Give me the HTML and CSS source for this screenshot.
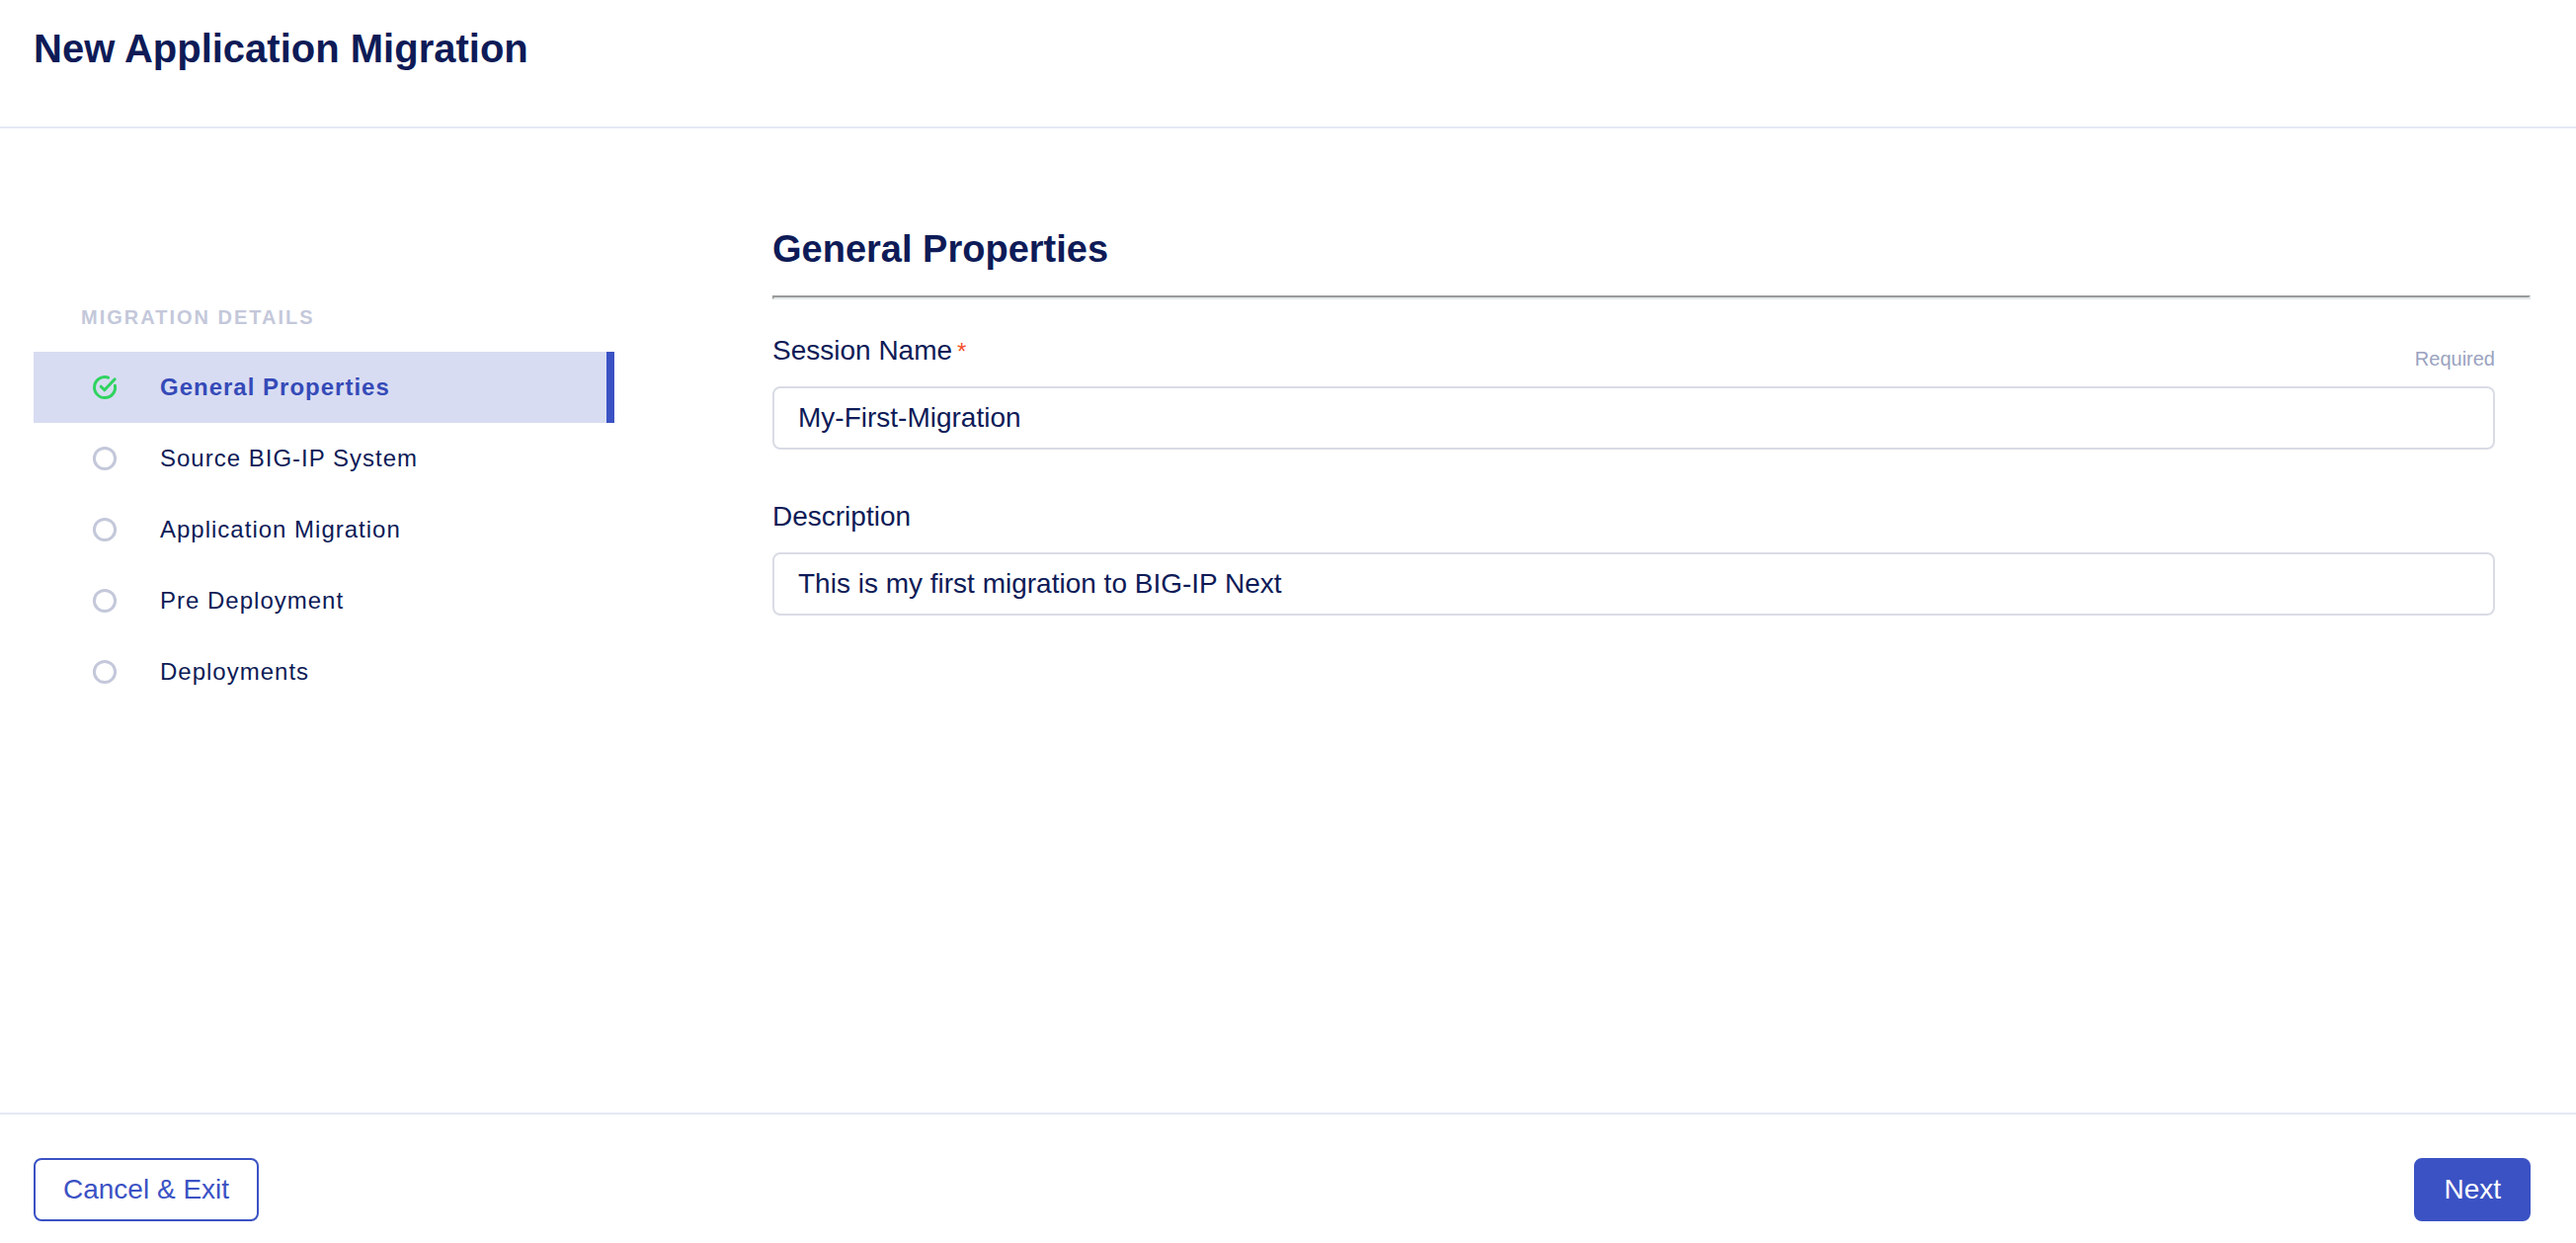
FILE: index.html
```html
<!DOCTYPE html>
<html lang="en">
<head>
  <meta charset="utf-8">
  <meta name="viewport" content="width=device-width, initial-scale=1">
  <title>New Application Migration</title>
  <link rel="stylesheet" href="styles.css">
</head>
<body>
  <header class="page-header">
    <h1 class="page-title">New Application Migration</h1>
  </header>

  <main class="wizard">
    <nav class="steps" aria-labelledby="steps-title">
      <h2 class="steps-title" id="steps-title">MIGRATION DETAILS</h2>
      <ul class="steps-list">
        <li>
          <a class="step step-active" href="#general" aria-current="step">
            <svg class="step-icon icon-done" viewBox="0 0 24 24" aria-hidden="true">
              <path d="M15.6 2.2A10.5 10.5 0 1 0 22.4 10.2"/>
              <path d="M8.2 11.2l3.6 3.6L22.2 3.8"/>
            </svg>
            <span>General Properties</span>
          </a>
        </li>
        <li>
          <a class="step" href="#source">
            <svg class="step-icon" viewBox="0 0 24 24" aria-hidden="true"><circle cx="12" cy="12" r="10.6"/></svg>
            <span>Source BIG-IP System</span>
          </a>
        </li>
        <li>
          <a class="step" href="#application">
            <svg class="step-icon" viewBox="0 0 24 24" aria-hidden="true"><circle cx="12" cy="12" r="10.6"/></svg>
            <span>Application Migration</span>
          </a>
        </li>
        <li>
          <a class="step" href="#pre-deployment">
            <svg class="step-icon" viewBox="0 0 24 24" aria-hidden="true"><circle cx="12" cy="12" r="10.6"/></svg>
            <span>Pre Deployment</span>
          </a>
        </li>
        <li>
          <a class="step" href="#deployments">
            <svg class="step-icon" viewBox="0 0 24 24" aria-hidden="true"><circle cx="12" cy="12" r="10.6"/></svg>
            <span>Deployments</span>
          </a>
        </li>
      </ul>
    </nav>

    <section class="panel" id="general">
      <h2 class="panel-title">General Properties</h2>
      <hr class="divider">
      <form class="fields" id="migration-form">
        <div class="field">
          <div class="field-head">
            <label class="field-label" for="session-name">Session Name<span class="asterisk">*</span></label>
            <span class="field-hint" id="session-hint">Required</span>
          </div>
          <input class="field-input" id="session-name" type="text" value="My-First-Migration" aria-describedby="session-hint" required>
        </div>
        <div class="field">
          <div class="field-head">
            <label class="field-label" for="description">Description</label>
          </div>
          <input class="field-input" id="description" type="text" value="This is my first migration to BIG-IP Next">
        </div>
      </form>
    </section>
  </main>

  <footer class="page-footer">
    <button class="button button-outline" type="button">Cancel &amp; Exit</button>
    <button class="button button-primary" type="submit" form="migration-form">Next</button>
  </footer>
</body>
</html>
```

FILE: styles.css
```css
:root {
  --navy: #0e1b57;
  --blue: #3b52c4;
  --blue-text: #354ab8;
  --line: #e4e9f5;
  --field-line: #d9dce5;
  --muted: #c4c8da;
  --hint: #9aa2bf;
}

* {
  box-sizing: border-box;
}

body {
  display: flex;
  flex-direction: column;
  min-height: 100vh;
  margin: 0;
  background: #fff;
  color: var(--navy);
  font-family: "Liberation Sans", Arial, sans-serif;
}

h1,
h2,
ul {
  margin: 0;
  padding: 0;
}

.page-header {
  padding: 25px 34px 55px;
  border-bottom: 2px solid var(--line);
}

.page-title {
  font-size: 40px;
  line-height: 48px;
}

.wizard {
  display: grid;
  flex: 1;
  grid-template-columns: 588px minmax(0, 1fr);
  gap: 160px;
  padding: 98px 46px 40px 34px;
}

.steps {
  padding-top: 81px;
}

.steps-title {
  padding-left: 48px;
  margin-bottom: 23px;
  color: var(--muted);
  font-size: 20px;
  line-height: 24px;
  letter-spacing: 2px;
}

.steps-list {
  list-style: none;
}

.step {
  display: flex;
  align-items: center;
  gap: 44px;
  height: 72px;
  padding-left: 60px;
  color: var(--navy);
  font-size: 24px;
  line-height: 28px;
  letter-spacing: 1px;
  text-decoration: none;
}

.step-active {
  border-right: 8px solid var(--blue);
  background: #d8dcf2;
  color: var(--blue-text);
  font-weight: bold;
}

.step-icon {
  width: 24px;
  height: 24px;
  overflow: visible;
  fill: none;
  stroke: var(--muted);
  stroke-width: 3;
}

.icon-done {
  stroke: #2fd35f;
  stroke-linecap: round;
  stroke-linejoin: round;
}

.panel-title {
  font-size: 38px;
  line-height: 48px;
}

.divider {
  height: 4px;
  margin: 23px 0 36px;
  border: 2px solid;
  border-color: #9a9a9a #e3e7ea #e3e7ea #9a9a9a;
}

.fields {
  display: grid;
  gap: 52px;
  padding-right: 36px;
}

.field-head {
  display: flex;
  align-items: flex-end;
  justify-content: space-between;
  margin-bottom: 16px;
}

.field-label {
  padding-bottom: 4px;
  font-size: 28px;
  line-height: 32px;
}

.asterisk {
  margin-left: 5px;
  color: #f4512c;
  font-size: 24px;
  line-height: 24px;
}

.field-hint {
  color: var(--hint);
  font-size: 20px;
  line-height: 24px;
}

.field-input {
  display: block;
  width: 100%;
  height: 64px;
  padding: 0 24px;
  border: 2px solid var(--field-line);
  border-radius: 8px;
  background: #fff;
  color: var(--navy);
  font: 28px "Liberation Sans", Arial, sans-serif;
}

.page-footer {
  display: flex;
  align-items: center;
  justify-content: space-between;
  padding: 44px 46px 22px 34px;
  border-top: 2px solid var(--line);
}

.button {
  height: 64px;
  padding: 0 28px;
  border: 2px solid var(--blue);
  border-radius: 8px;
  font: 28px "Liberation Sans", Arial, sans-serif;
}

.button-outline {
  background: #fff;
  color: var(--blue);
}

.button-primary {
  background: var(--blue);
  color: #fff;
}
```
